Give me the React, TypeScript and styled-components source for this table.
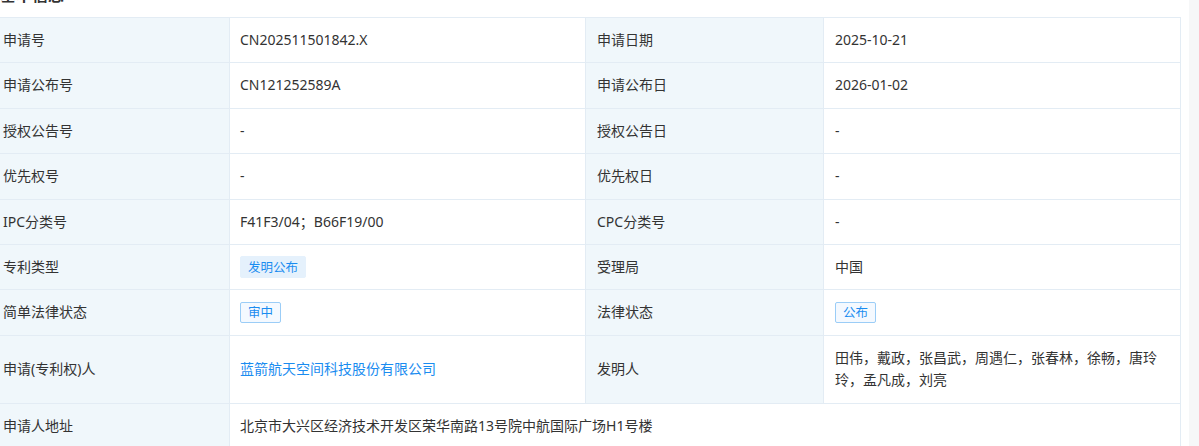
import React from "react";
import styled, { createGlobalStyle } from "styled-components";

const GlobalStyle = createGlobalStyle`
  html, body {
    margin: 0;
    padding: 0;
    background: #ffffff;
    overflow: hidden;
  }
  body {
    font-family: "Noto Sans", "Noto Sans CJK SC", sans-serif;
    color: #333333;
  }
`;

const Page = styled.div`
  display: flex;
  width: 1199px;
  height: 446px;
  overflow: hidden;
`;

const Main = styled.main`
  flex: 1;
  min-width: 0;
  padding-right: 8px;
`;

const ScrollTrack = styled.div`
  width: 10px;
  flex: none;
  background: #f6f7f8;
`;

const Title = styled.h3`
  margin: -17px 0 12px 0;
  font-size: 16px;
  line-height: 22px;
  font-weight: 700;
  color: #333333;
  font-family: "Noto Sans CJK SC", sans-serif;
`;

const Table = styled.div`
  display: grid;
  grid-template-columns: 238px 356px 238px 1fr;
  margin-left: -9px;
  border-top: 1px solid #e3ecf4;
  border-left: 1px solid #e3ecf4;
`;

const Cell = styled.div<{ $label?: boolean; $span?: number; $tight?: boolean }>`
  display: flex;
  align-items: center;
  padding: 11px 11px 11px ${(p) => (p.$tight ? "10px" : "11px")};
  font-size: 14px;
  line-height: 22.4px;
  color: #333333;
  font-family: "Noto Sans", "Noto Sans CJK SC", sans-serif;
  background: ${(p) => (p.$label ? "#f0f7fb" : "#ffffff")};
  border-right: 1px solid #e3ecf4;
  border-bottom: 1px solid #e3ecf4;
  grid-column: ${(p) => (p.$span ? `span ${p.$span}` : "auto")};
  word-break: break-all;
`;

const Link = styled.a`
  color: #1a8cf0;
  text-decoration: none;
  cursor: pointer;
`;

const Tag = styled.span<{ $outline?: boolean }>`
  display: inline-flex;
  align-items: center;
  height: ${(p) => (p.$outline ? "21px" : "22px")};
  box-sizing: border-box;
  padding: 0 ${(p) => (p.$outline ? "7px" : "7px")};
  font-size: 12.5px;
  line-height: 1;
  color: #1a8cf0;
  font-family: "Noto Sans CJK SC", sans-serif;
  background: ${(p) => (p.$outline ? "#f4f9ff" : "#e5f1fc")};
  border: 1px solid ${(p) => (p.$outline ? "#9bcdf7" : "#e5f1fc")};
  border-radius: 2px;
`;

type Item = { label: string; value: React.ReactNode };

const rows: [Item, Item][] = [
  [
    { label: "申请号", value: "CN202511501842.X" },
    { label: "申请日期", value: "2025-10-21" },
  ],
  [
    { label: "申请公布号", value: "CN121252589A" },
    { label: "申请公布日", value: "2026-01-02" },
  ],
  [
    { label: "授权公告号", value: "-" },
    { label: "授权公告日", value: "-" },
  ],
  [
    { label: "优先权号", value: "-" },
    { label: "优先权日", value: "-" },
  ],
  [
    { label: "IPC分类号", value: "F41F3/04；B66F19/00" },
    { label: "CPC分类号", value: "-" },
  ],
  [
    { label: "专利类型", value: <Tag>发明公布</Tag> },
    { label: "受理局", value: "中国" },
  ],
  [
    { label: "简单法律状态", value: <Tag $outline>审中</Tag> },
    { label: "法律状态", value: <Tag $outline>公布</Tag> },
  ],
  [
    { label: "申请(专利权)人", value: <Link>蓝箭航天空间科技股份有限公司</Link> },
    {
      label: "发明人",
      value: "田伟，戴政，张昌武，周遇仁，张春林，徐畅，唐玲玲，孟凡成，刘亮",
    },
  ],
];

export default function App() {
  return (
    <>
      <GlobalStyle />
      <Page>
        <Main>
          <Title>基本信息</Title>
          <Table>
            {rows.map(([a, b]) => (
              <React.Fragment key={a.label}>
                <Cell $label>{a.label}</Cell>
                <Cell $tight>{a.value}</Cell>
                <Cell $label>{b.label}</Cell>
                <Cell>{b.value}</Cell>
              </React.Fragment>
            ))}
            <Cell $label>申请人地址</Cell>
            <Cell $tight $span={3}>北京市大兴区经济技术开发区荣华南路13号院中航国际广场H1号楼</Cell>
          </Table>
        </Main>
        <ScrollTrack />
      </Page>
    </>
  );
}
